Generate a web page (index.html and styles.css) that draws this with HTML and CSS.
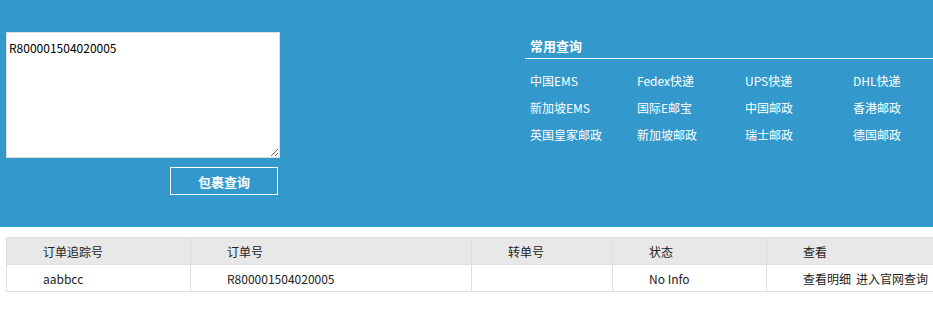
FILE: index.html
```html
<!DOCTYPE html>
<html lang="zh-CN">
<head>
    <meta charset="UTF-8">
    <meta name="viewport" content="width=device-width, initial-scale=1.0">
    <title>包裹查询</title>
    <link rel="stylesheet" href="styles.css">
</head>
<body>
    <div class="search-band">
        <div class="search-box">
            <textarea id="trackNo">R800001504020005</textarea>
            <button class="search-btn">包裹查询</button>
        </div>
        <div class="quick">
            <h3>常用查询</h3>
            <ul class="quick-list">
                <li><a href="#">中国EMS</a></li>
                <li><a href="#">Fedex快递</a></li>
                <li><a href="#">UPS快递</a></li>
                <li><a href="#">DHL快递</a></li>
                <li><a href="#">新加坡EMS</a></li>
                <li><a href="#">国际E邮宝</a></li>
                <li><a href="#">中国邮政</a></li>
                <li><a href="#">香港邮政</a></li>
                <li><a href="#">英国皇家邮政</a></li>
                <li><a href="#">新加坡邮政</a></li>
                <li><a href="#">瑞士邮政</a></li>
                <li><a href="#">德国邮政</a></li>
            </ul>
        </div>
    </div>

    <div class="result">
        <table class="track-table">
            <thead>
                <tr>
                    <th class="c1">订单追踪号</th>
                    <th class="c2">订单号</th>
                    <th class="c3">转单号</th>
                    <th class="c4">状态</th>
                    <th class="c5">查看</th>
                </tr>
            </thead>
            <tbody>
                <tr>
                    <td>aabbcc</td>
                    <td>R800001504020005</td>
                    <td></td>
                    <td>No Info</td>
                    <td><a href="#">查看明细</a><a href="#" class="gap">进入官网查询</a></td>
                </tr>
            </tbody>
        </table>
    </div>
</body>
</html>
```

FILE: styles.css
```css
body {
    margin: 0;
    font-family: "Microsoft YaHei", "Noto Sans CJK SC", sans-serif;
    font-size: 12px;
    color: #222;
    overflow: hidden;
}
a {
    color: inherit;
    text-decoration: none;
}
.search-band {
    background-color: #3399cc;
    height: 227px;
    display: flex;
}
.search-box {
    width: 274px;
    margin: 32px 0 0 6px;
    display: flex;
    flex-direction: column;
    align-items: flex-end;
}
.search-box textarea {
    width: 274px;
    height: 126px;
    box-sizing: border-box;
    border: 1px solid #ddd;
    padding: 6px 2px;
    margin: 0;
    font-family: inherit;
    font-size: 12px;
    line-height: 17px;
    color: #000;
    resize: vertical;
    outline: none;
}
.search-btn {
    width: 108px;
    height: 28px;
    margin: 9px 2px 0 0;
    background: transparent;
    border: 1px solid #fff;
    color: #fff;
    font-family: inherit;
    font-size: 13px;
    font-weight: bold;
    cursor: pointer;
}
.quick {
    margin-left: 245px;
    flex: 1;
    color: #fff;
}
.quick h3 {
    margin: 36px 0 0;
    padding: 0 0 3px 5px;
    font-size: 13px;
    line-height: 19px;
    border-bottom: 1px solid #fff;
}
.quick-list {
    list-style: none;
    margin: 13px 0 0;
    padding: 0 0 0 5px;
    display: grid;
    grid-template-columns: 107px 108px 108px 80px;
    row-gap: 10px;
}
.quick-list li {
    line-height: 17px;
}
.result {
    padding: 10px 0 0 6px;
}
.track-table {
    width: 940px;
    border-collapse: collapse;
    table-layout: fixed;
}
.track-table th, .track-table td {
    border: 1px solid #ddd;
    height: 26px;
    padding: 0 0 0 36px;
    text-align: left;
    font-weight: normal;
    line-height: 17px;
    white-space: nowrap;
}
.track-table th {
    background-color: #e8e8e8;
}
.c1 { width: 147px; }
.c2 { width: 244px; }
.c3 { width: 104px; }
.c4 { width: 117px; }
.gap {
    margin-left: 5px;
}
```
